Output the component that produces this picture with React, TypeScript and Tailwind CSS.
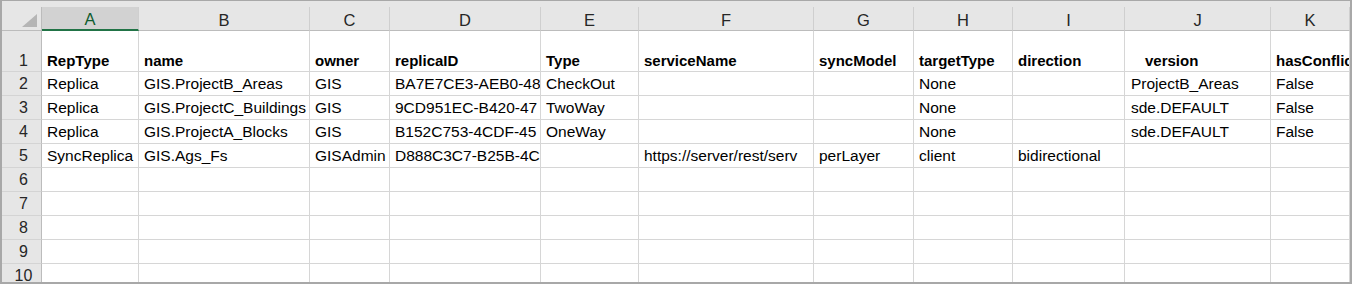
import React from "react";

const COLS = [
  { key: "A", w: "w-[97px]" },
  { key: "B", w: "w-[171px]" },
  { key: "C", w: "w-[80px]" },
  { key: "D", w: "w-[151px]" },
  { key: "E", w: "w-[98px]" },
  { key: "F", w: "w-[175px]" },
  { key: "G", w: "w-[100px]" },
  { key: "H", w: "w-[99px]" },
  { key: "I", w: "w-[112px]" },
  { key: "J", w: "w-[146px]" },
  { key: "K", w: "w-[79px]" },
];

const HEADERS = [
  "RepType",
  "name",
  "owner",
  "replicaID",
  "Type",
  "serviceName",
  "syncModel",
  "targetType",
  "direction",
  "version",
  "hasConflicts",
];

// Long values are shown only up to the edge of their column
const DATA: string[][] = [
  ["Replica", "GIS.ProjectB_Areas", "GIS", "BA7E7CE3-AEB0-48", "CheckOut", "", "", "None", "", "ProjectB_Areas", "False"],
  ["Replica", "GIS.ProjectC_Buildings", "GIS", "9CD951EC-B420-47", "TwoWay", "", "", "None", "", "sde.DEFAULT", "False"],
  ["Replica", "GIS.ProjectA_Blocks", "GIS", "B152C753-4CDF-45", "OneWay", "", "", "None", "", "sde.DEFAULT", "False"],
  ["SyncReplica", "GIS.Ags_Fs", "GISAdmin", "D888C3C7-B25B-4C", "", "https://server/rest/serv", "perLayer", "client", "bidirectional", "", ""],
];

const EMPTY_ROWS = [6, 7, 8, 9];

function RowNum({ n, h, align = "center" }: { n: number; h: string; align?: "center" | "end" }) {
  return (
    <div
      className={`w-[40px] ${h} shrink-0 bg-[#e6e6e6] border-r border-b border-r-[#bcbcbc] border-b-[#d4d4d4] flex ${
        align === "end" ? "items-end pb-[1px] leading-[18px]" : "items-center"
      } justify-center pl-[4px] text-[16px] text-[#262626]`}
    >
      {n}
    </div>
  );
}

export default function App() {
  return (
    <div
      className="w-[1352px] h-[284px] bg-white border-t border-l-2 border-r-2 border-b-2 border-[#a8a8a8] overflow-hidden flex flex-col"
      style={{ fontFamily: '"Liberation Sans", Arial, sans-serif' }}
    >
      {/* column letters */}
      <div className="h-[30px] shrink-0 flex items-end bg-[#e6e6e6]">
        <div className="w-[40px] h-[24px] shrink-0 border-r border-b border-r-[#bcbcbc] border-b-[#bcbcbc] relative">
          <svg className="absolute left-[20px] top-[7px]" width="15" height="13" viewBox="0 0 15 13">
            <polygon points="15,0 15,13 0,13" fill="#b5b5b5" />
          </svg>
        </div>
        {COLS.map((c, i) => (
          <div
            key={c.key}
            className={`${c.w} h-[24px] shrink-0 flex items-center justify-center text-[16.5px] border-r border-r-[#cfcfcf] pt-[3px] ${
              i === 0
                ? "bg-[#d2d2d2] text-[#0e5c2f] border-b-2 border-b-[#217346]"
                : "text-[#262626] border-b border-b-[#bcbcbc]"
            }`}
          >
            {c.key}
          </div>
        ))}
      </div>

      {/* field names */}
      <div className="h-[41px] shrink-0 flex">
        <RowNum n={1} h="h-[41px]" align="end" />
        {COLS.map((c, i) => (
          <div
            key={c.key}
            className={`${c.w} h-[41px] shrink-0 border-r border-b border-[#d6d6d6] flex items-end pb-[1px] leading-[18px] overflow-hidden whitespace-nowrap font-bold text-[15px] text-black ${
              i === 9 ? "pl-[20px]" : "pl-[5px]"
            }`}
          >
            {HEADERS[i]}
          </div>
        ))}
      </div>

      {/* replica rows */}
      {DATA.map((row, r) => (
        <div key={r} className="h-[24px] shrink-0 flex">
          <RowNum n={r + 2} h="h-[24px]" />
          {COLS.map((c, i) => (
            <div
              key={c.key}
              className={`${c.w} h-[24px] shrink-0 border-r border-b border-[#d6d6d6] flex items-center pt-[1px] overflow-hidden whitespace-nowrap text-[15.5px] text-black ${
                i === 9 ? "pl-[6px]" : "pl-[5px]"
              }`}
            >
              {row[i]}
            </div>
          ))}
        </div>
      ))}

      {EMPTY_ROWS.map((n) => (
        <div key={n} className="h-[24px] shrink-0 flex">
          <RowNum n={n} h="h-[24px]" />
          {COLS.map((c) => (
            <div key={c.key} className={`${c.w} h-[24px] shrink-0 border-r border-b border-[#d6d6d6]`} />
          ))}
        </div>
      ))}

      <div className="h-[18px] shrink-0 flex">
        <div className="w-[40px] h-[18px] shrink-0 bg-[#e6e6e6] border-r border-r-[#bcbcbc] flex items-start justify-center pl-[4px] pt-[4px] text-[16px] leading-none text-[#262626]">
          10
        </div>
        {COLS.map((c) => (
          <div key={c.key} className={`${c.w} h-[18px] shrink-0 border-r border-[#d6d6d6]`} />
        ))}
      </div>
    </div>
  );
}
